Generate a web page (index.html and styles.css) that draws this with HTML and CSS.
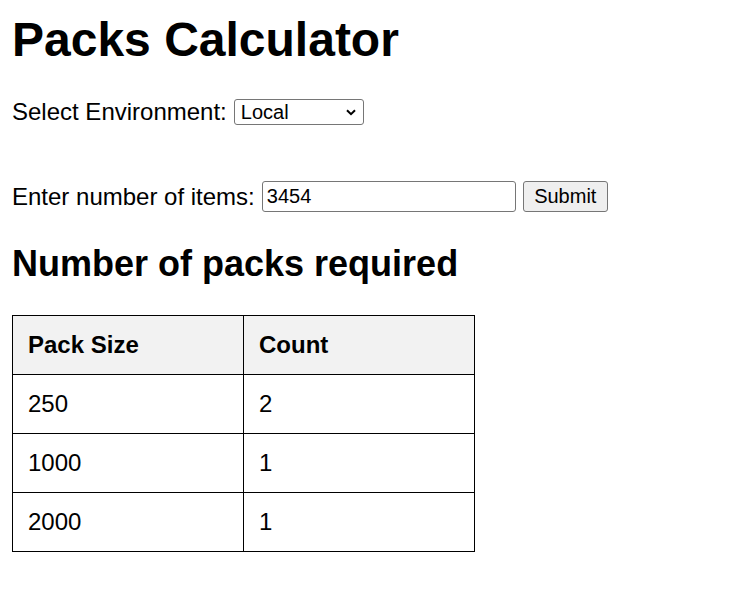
FILE: index.html
```html
<!DOCTYPE html>
<html>
<head>
<meta charset="utf-8">
<title>Packs Calculator</title>
<link rel="stylesheet" href="styles.css">
</head>
<body>
<div class="page">
  <h1 class="title">Packs Calculator</h1>
  <div class="row row-env">
    <label class="label" for="env">Select Environment:</label>
    <span class="select-wrap">
      <select id="env" class="select">
        <option>Local</option>
        <option>Production</option>
      </select>
      <svg class="chevron" width="10" height="7" viewBox="0 0 10 7" aria-hidden="true">
        <path d="M1 1.2 L5 5.2 L9 1.2" fill="none" stroke="#000" stroke-width="2"/>
      </svg>
    </span>
  </div>
  <form class="row row-items" onsubmit="return false">
    <label class="label" for="items">Enter number of items:</label>
    <input id="items" class="input" type="text" value="3454">
    <button class="button" type="submit">Submit</button>
  </form>
  <h2 class="subtitle">Number of packs required</h2>
  <table class="packs">
    <thead>
      <tr><th>Pack Size</th><th>Count</th></tr>
    </thead>
    <tbody>
      <tr><td>250</td><td>2</td></tr>
      <tr><td>1000</td><td>1</td></tr>
      <tr><td>2000</td><td>1</td></tr>
    </tbody>
  </table>
</div>
</body>
</html>
```

FILE: styles.css
```css
html, body {
  margin: 0;
  padding: 0;
  background: #ffffff;
}

body {
  font-family: "Liberation Sans", Arial, sans-serif;
  color: #000000;
  font-size: 24px;
}

.page {
  padding: 12px;
}

.title {
  margin: 0;
  font-size: 48px;
  line-height: 55px;
  font-weight: bold;
}

.row {
  display: flex;
  align-items: center;
  gap: 7px;
}

.row-env {
  margin-top: 31px;
  height: 28px;
}

.row-items {
  margin: 55px 0 0 0;
  height: 31px;
}

.label {
  font-size: 24px;
  line-height: 28px;
}

.select-wrap {
  position: relative;
  display: inline-flex;
}

.select {
  -webkit-appearance: none;
  appearance: none;
  box-sizing: border-box;
  width: 130px;
  height: 26px;
  font-family: "Liberation Sans", Arial, sans-serif;
  font-size: 20px;
  line-height: 24px;
  color: #000;
  background: #fff;
  border: 1px solid #767676;
  border-radius: 3px;
  padding: 0 24px 0 6px;
  margin: 0;
}

.chevron {
  position: absolute;
  right: 8px;
  top: 10px;
  pointer-events: none;
}

.input {
  box-sizing: border-box;
  width: 254px;
  height: 31px;
  font-family: "Liberation Sans", Arial, sans-serif;
  font-size: 20px;
  color: #000;
  border: 1px solid #767676;
  border-radius: 3px;
  padding: 1px 4px;
  margin: 0;
}

.button {
  box-sizing: border-box;
  height: 31px;
  width: 85px;
  font-family: "Liberation Sans", Arial, sans-serif;
  font-size: 20px;
  color: #000;
  background: #efefef;
  border: 1px solid #767676;
  border-radius: 3px;
  padding: 0 6px;
  margin: 0;
}

.subtitle {
  margin: 31px 0 0 0;
  font-size: 36px;
  line-height: 41px;
  font-weight: bold;
}

.packs {
  margin-top: 31px;
  width: 463px;
  border-collapse: collapse;
  table-layout: fixed;
  font-size: 24px;
}

.packs th,
.packs td {
  border: 1px solid #000;
  padding: 15px;
  line-height: 28px;
  text-align: left;
}

.packs th {
  background: #f2f2f2;
  font-weight: bold;
}
```
